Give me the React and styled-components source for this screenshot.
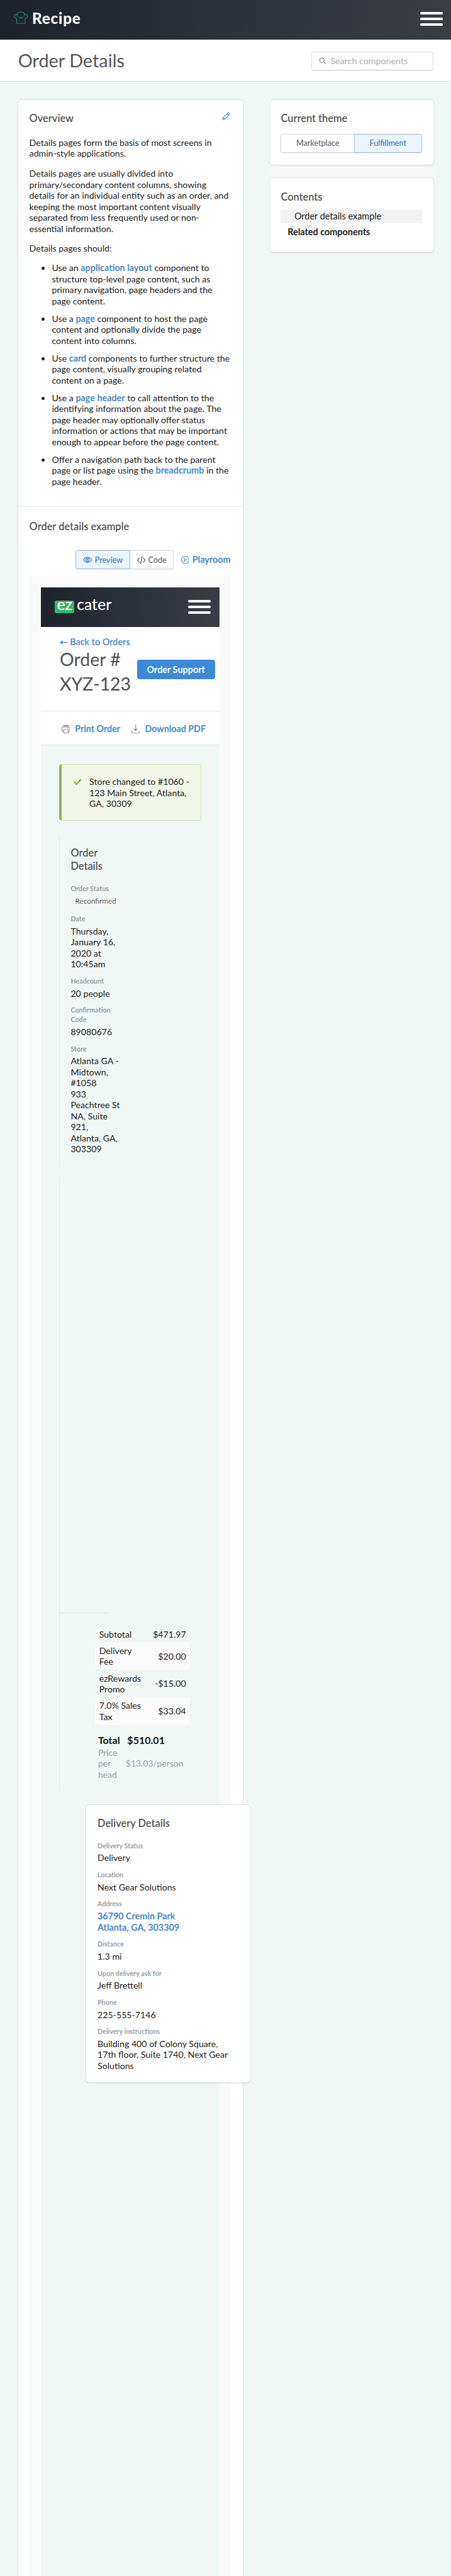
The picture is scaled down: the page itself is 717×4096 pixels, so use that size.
import React from "react";
import styled, { createGlobalStyle, css } from "styled-components";

const link = "#4689c8";
const mint = "#f1f7f5";

const GlobalStyle = createGlobalStyle`
  * { box-sizing: border-box; }
  html, body { margin: 0; padding: 0; background: ${mint}; overflow: hidden; }
  body { font-family: Lato, "Liberation Sans", sans-serif; }
  h1, h2, p, ul, dl, dd { margin: 0; padding: 0; font-weight: 400; }
`;

const Page = styled.div`
  zoom: 0.8965;
  width: 800px;
  height: 4570px;
  display: flex;
  flex-direction: column;
  overflow: hidden;
  background: ${mint};
  color: #1c1c1c;
  font-size: 15.8px;
  line-height: 19.5px;
`;

const darkBar = css`
  display: flex;
  justify-content: space-between;
  height: 70px;
  flex: none;
  background: linear-gradient(100deg, #1d222a 0%, #2d3139 50%, #3b3d45 100%);
`;

const TopBar = styled.header`
  ${darkBar}
  padding: 21.5px 15px 0 24px;
`;

const Brand = styled.div`
  display: flex;
  gap: 8px;
  margin-top: -3px;
  color: #fff;
  font-size: 27px;
  font-weight: 900;
  letter-spacing: 0.9px;
  line-height: 26px;
  svg { margin-top: 1.5px; }
`;

const Burger = styled.button`
  display: flex;
  flex-direction: column;
  gap: 6px;
  width: 40px;
  padding: 0;
  border: 0;
  background: none;
  span { height: 4px; border-radius: 2px; background: #fff; }
`;

const TitleBar = styled.div`
  display: flex;
  justify-content: space-between;
  flex: none;
  height: 75px;
  padding: 21px 32px 0;
  background: #fff;
  border-bottom: 1px solid #d3dada;
  box-shadow: 0 1px 4px rgba(0, 0, 0, 0.04);
`;

const PageTitle = styled.h1`
  margin-top: -1.5px;
  color: #565656;
  font-size: 32.2px;
  line-height: 36px;
`;

const SearchBox = styled.label`
  display: flex;
  align-items: center;
  gap: 8px;
  width: 216px;
  height: 34px;
  padding: 0 12px;
  border: 1px solid #dcdcdc;
  border-bottom-color: #cfcfcf;
  border-radius: 4px;
  box-shadow: 0 1px 1px rgba(0, 0, 0, 0.06);
  color: #adadad;
  font-size: 15.9px;
  svg { color: #8a8a8a; }
`;

const Columns = styled.main`
  display: flex;
  align-items: flex-start;
  justify-content: space-between;
  flex: 1;
  padding: 32px 32px 0;
`;

const cardFrame = css`
  background: #fff;
  border-radius: 6px;
  box-shadow: 0 0 0 1px rgba(0, 0, 0, 0.04), 0 1px 3px rgba(0, 0, 0, 0.12);
`;

const MainCard = styled.section`
  ${cardFrame}
  width: 399px;
  height: 4500px;
`;

const Section = styled.div`
  padding: ${(p) => p.$top}px 20px ${(p) => p.$bottom || 0}px;
  border-bottom: ${(p) => (p.$divided ? "1px solid #e4e6e6" : "0")};
`;

const Heading = styled.h2`
  margin-bottom: ${(p) => p.$gap || 0}px;
  color: #545454;
  font-size: 18.3px;
  font-weight: 600;
  line-height: 24.4px;
`;

const HeadingRow = styled.div`
  display: flex;
  justify-content: space-between;
  margin-bottom: 21.1px;
  padding-right: 2px;
`;

const Copy = styled.p`
  max-width: 356px;
  margin-bottom: ${(p) => p.$gap || 16}px;
`;

const Bullets = styled.ul`
  padding-left: 40px;
  li { margin-bottom: 11.8px; }
`;

const Link = styled.a`
  color: ${link};
  font-size: 16px;
  font-weight: 700;
`;

const ToolRow = styled.div`
  display: flex;
  justify-content: flex-end;
  align-items: center;
  gap: 13px;
  margin: 30.5px 2px 11.3px 0;
`;

const Segments = styled.div`
  display: flex;
  width: ${(p) => p.$width}px;
  height: 34px;
`;

const Segment = styled.button`
  display: flex;
  align-items: center;
  justify-content: center;
  gap: 5px;
  width: ${(p) => p.$width}px;
  padding: 0;
  border: 1px solid ${(p) => (p.$active ? "#8fb8de" : "#d6d6d6")};
  border-left-width: ${(p) => (p.$side === "right" && !p.$active ? 0 : 1)}px;
  border-right-width: ${(p) => (p.$side === "left" && !p.$active ? 0 : 1)}px;
  border-radius: ${(p) => (p.$side === "left" ? "4px 0 0 4px" : "0 4px 4px 0")};
  box-shadow: 0 1px 1px rgba(0, 0, 0, 0.07);
  background: ${(p) => (p.$active ? "#eaf5fe" : "#fff")};
  color: ${(p) => (p.$active ? "#2f6fb5" : "#565656")};
  font: 400 14.1px Lato, sans-serif;
`;

const Playroom = styled.a`
  display: flex;
  align-items: center;
  gap: 6px;
  color: ${link};
  font-size: 16.1px;
  font-weight: 700;
`;

const Stage = styled.div`
  width: 357px;
  height: 3560px;
  padding: 21px 20px 0 21px;
  background: #fafafa;
`;

const Preview = styled.div`
  width: 316px;
  height: 3540px;
  background: ${mint};
`;

const AppBar = styled.div`
  ${darkBar}
  padding: 22px 15px 0 24px;
`;

const EzLogo = styled.div`
  display: flex;
  align-items: center;
  gap: 4px;
  height: 24px;
  color: #fff;
  font-size: 27.8px;
  font-weight: 500;
  line-height: 22px;
`;

const EzTile = styled.span`
  width: 35px;
  height: 22px;
  border-radius: 3px;
  background: #35b56b;
  line-height: 13px;
  text-align: center;
`;

const EzWord = styled.span`
  margin-top: -8px;
`;

const OrderHeader = styled.div`
  height: 149px;
  padding: 17px 8px 0 33px;
  border-bottom: 1px solid #dfe3e3;
  background: #fff;
`;

const BackLink = styled.a`
  display: flex;
  align-items: center;
  gap: 4px;
  margin-bottom: -1px;
  color: ${link};
  font-size: 16.1px;
  font-weight: 600;
  line-height: 20px;
`;

const OrderTitleRow = styled.div`
  display: flex;
  justify-content: space-between;
  align-items: center;
`;

const OrderTitle = styled.h1`
  width: 130px;
  color: #4f4f4f;
  font-size: 31.7px;
  line-height: 43px;
`;

const SupportButton = styled.button`
  width: 138px;
  height: 34px;
  margin-bottom: 8px;
  padding: 0;
  border: 0;
  border-radius: 4px;
  background: #3b8bd8;
  color: #fff;
  font: 700 16.1px Lato, sans-serif;
`;

const ActionBar = styled.div`
  display: flex;
  align-items: center;
  gap: 20px;
  height: 61px;
  padding: 3px 0 0 36px;
  border-bottom: 1px solid #dfe3e3;
  background: #fff;
`;

const Action = styled.a`
  display: flex;
  align-items: center;
  gap: 9px;
  color: ${link};
  font-size: 15.9px;
  font-weight: 700;
  white-space: nowrap;
`;

const Alert = styled.div`
  display: flex;
  align-items: flex-start;
  gap: 14px;
  width: 252px;
  height: 100px;
  margin: 33px 0 0 32px;
  padding: 20.5px 12px 0 21px;
  border: 1px solid #d3e0b8;
  border-left: 5px solid #8ab556;
  border-radius: 5px;
  background: #f3f7e7;
  svg { flex: none; margin-top: 4px; }
`;

const Rail = styled.div`
  width: ${(p) => p.$width || 110}px;
  height: ${(p) => p.$height}px;
  margin: ${(p) => p.$top}px 0 0 32px;
  padding: ${(p) => p.$pad || 0}px 0 0 19.3px;
  border-left: 1px solid #e4ebe9;
`;

const RailRule = styled.div`
  width: 88px;
  height: 773px;
  margin-left: -20px;
  border-bottom: 1px solid #dde3e1;
`;

const Details = styled.dl`
  width: ${(p) => p.$width || 93}px;
  dt {
    margin-bottom: 3.8px;
    color: #9a9fa6;
    font-size: 12px;
    font-weight: 700;
    line-height: 17px;
  }
  dd { margin-bottom: 11.4px; }
`;

const Badge = styled.span`
  display: inline-block;
  padding: 1.1px 8px;
  border-radius: 3px;
  background: #f4f6f6;
  color: #666;
  font-size: 13.1px;
`;

const Charges = styled.div`
  width: 168px;
  margin: 22.5px 0 0 43.5px;
`;

const Charge = styled.div`
  display: flex;
  justify-content: space-between;
  align-items: center;
  padding: 4.9px 7px;
  background: ${(p) => (p.$striped ? "#fafafa" : "transparent")};
  span:first-child { width: 80px; }
`;

const Total = styled.div`
  display: flex;
  gap: 13px;
  margin: 15.5px 0 0 48.5px;
  color: #111;
  font-size: 17.9px;
  font-weight: 700;
  line-height: 23.4px;
`;

const PerHead = styled.div`
  display: flex;
  align-items: center;
  margin-left: 48.5px;
  color: #9aa1ac;
  font-size: 15.6px;
  span:first-child { width: 49px; padding-right: 10px; }
`;

const DeliveryCard = styled.section`
  ${cardFrame}
  width: 291px;
  height: 492px;
  margin: 25px 0 0 80px;
  padding: 20.5px 20px 0;
`;

const Side = styled.aside`
  display: flex;
  flex-direction: column;
  gap: 24px;
  width: 290px;
  border-radius: 6px;
  background: #f5f6f6;
`;

const SideCard = styled.section`
  ${cardFrame}
  height: ${(p) => p.$height}px;
  padding: 20.5px 20px 0;
`;

const TocItem = styled.a`
  display: block;
  height: 24px;
  margin-bottom: 4px;
  padding-left: ${(p) => (p.$active ? 24 : 12)}px;
  background: ${(p) => (p.$active ? "#f3f3f3" : "transparent")};
  font-size: 16.1px;
  font-weight: ${(p) => (p.$active ? 400 : 700)};
  line-height: 24px;
`;

const Icon = ({ w, stroke = 2, children }) => (
  <svg width={w} height={w} viewBox="0 0 24 24" fill="none" stroke="currentColor" strokeWidth={stroke} strokeLinecap="round" strokeLinejoin="round">
    {children}
  </svg>
);

const Menu = () => (
  <Burger aria-label="Menu">
    <span />
    <span />
    <span />
  </Burger>
);

const Field = ({ label, children }) => (
  <>
    <dt>{label}</dt>
    <dd>{children}</dd>
  </>
);

export default function App() {
  return (
    <Page>
      <GlobalStyle />
      <TopBar>
        <Brand>
          <svg width="25" height="23" viewBox="0 0 25 23" fill="none" stroke="#16895d" strokeWidth="1.3" strokeLinejoin="round">
            <path d="M5 12.500C-1 12-.2 4.500 6 5.200 7.500-.2 17.500-.2 19 5.200c6.200-.7 7 6.800 1 7.300v9H5z" />
            <path d="M6 5.200c-.5 1.500-.2 2.800.5 3.800M19 5.200c.5 1.500.2 2.800-.5 3.800M8.500 9.500c.5 3 4 3 4 .5 0 2.500 3.500 2.500 4-.5" />
          </svg>
          <span>Recipe</span>
        </Brand>
        <Menu />
      </TopBar>
      <TitleBar>
        <PageTitle>Order Details</PageTitle>
        <SearchBox>
          <Icon w={13} stroke={2.6}>
            <circle cx="10" cy="10" r="7.500" />
            <path d="M15.500 15.500 22 22" />
          </Icon>
          Search components
        </SearchBox>
      </TitleBar>
      <Columns>
        <MainCard>
          <Section $divided $top={20.5} $bottom={22.5}>
            <HeadingRow>
              <Heading>Overview</Heading>
              <Link aria-label="Edit">
                <Icon w={15}>
                  <path d="M2 22l1.500-6L17 2.500c1.500-1.500 6 3 4.500 4.500L8 20.500zM14.500 5l4.500 4.500M3.500 16 8 20.500" />
                </Icon>
              </Link>
            </HeadingRow>
            <Copy>Details pages form the basis of most screens in admin-style applications.</Copy>
            <Copy>
              Details pages are usually divided into primary/secondary content columns, showing details for an
              individual entity such as an order, and keeping the most important content visually separated from less
              frequently used or non-essential information.
            </Copy>
            <Copy $gap={15}>Details pages should:</Copy>
            <Bullets>
              <li>
                Use an <Link>application layout</Link> component to structure top-level page content, such as primary
                navigation, page headers and the page content.
              </li>
              <li>
                Use a <Link>page</Link> component to host the page content and optionally divide the page content into
                columns.
              </li>
              <li>
                Use <Link>card</Link> components to further structure the page content, visually grouping related
                content on a page.
              </li>
              <li>
                Use a <Link>page header</Link> to call attention to the identifying information about the page. The
                page header may optionally offer status information or actions that may be important enough to appear
                before the page content.
              </li>
              <li>
                Offer a navigation path back to the parent page or list page using the <Link>breadcrumb</Link> in the
                page header.
              </li>
            </Bullets>
          </Section>
          <Section $top={22}>
            <Heading>Order details example</Heading>
            <ToolRow>
              <Segments $width={174}>
                <Segment $active $side="left" $width={97}>
                  <Icon w={16} stroke={1.8}>
                    <path d="M1.500 12C5 2.500 19 2.500 22.500 12 19 21.500 5 21.500 1.500 12z" />
                    <circle cx="12" cy="12" r="4.500" />
                    <circle cx="12" cy="12" r="1" />
                  </Icon>
                  Preview
                </Segment>
                <Segment $side="right" $width={77}>
                  <Icon w={15} stroke={2.2}>
                    <path d="M6 6 1 12l5 6M18 6l5 6-5 6M14 2l-4 20" />
                  </Icon>
                  Code
                </Segment>
              </Segments>
              <Playroom>
                <Icon w={14}>
                  <circle cx="12" cy="12" r="11" />
                  <path d="M9 7.500 16.500 12 9 16.500z" />
                </Icon>
                Playroom
              </Playroom>
            </ToolRow>
            <Stage>
              <Preview>
                <AppBar>
                  <EzLogo>
                    <EzTile>ez</EzTile>
                    <EzWord>cater</EzWord>
                  </EzLogo>
                  <Menu />
                </AppBar>
                <OrderHeader>
                  <BackLink>
                    <svg width="14" height="8" viewBox="0 0 14 8" fill="currentColor">
                      <path d="M0 4 5 0v3.200h9v1.600H5V8z" />
                    </svg>
                    Back to Orders
                  </BackLink>
                  <OrderTitleRow>
                    <OrderTitle>Order # XYZ-123</OrderTitle>
                    <SupportButton>Order Support</SupportButton>
                  </OrderTitleRow>
                </OrderHeader>
                <ActionBar>
                  <Action>
                    <svg width="15" height="16" viewBox="0 0 15 16" fill="none" stroke="#8b8b8b" strokeWidth="1.200" strokeLinejoin="round">
                      <path d="M3.500 12H.7V4.500h13.600V12h-2.800M3.500 4.500v-3h8v3M3.500 9h8v6h-8zM5 2.800h5M10.500 6.800h1.500" />
                    </svg>
                    Print Order
                  </Action>
                  <Action>
                    <svg width="15" height="16" viewBox="0 0 15 16" fill="none" stroke="#8b8b8b" strokeWidth="1.300">
                      <path d="M7.500 0v10.500M4 7.200l3.500 3.500L11 7.200M.7 10.500v4.800h13.600v-4.800" />
                    </svg>
                    Download PDF
                  </Action>
                </ActionBar>
                <Alert>
                  <svg width="14" height="12" viewBox="0 0 14 12" fill="none" stroke="#86b04e" strokeWidth="2.800">
                    <path d="M1 5.800 5 9.800 13 1.500" />
                  </svg>
                  <div>Store changed to #1060 - 123 Main Street, Atlanta, GA, 30309</div>
                </Alert>
                <Rail $top={25} $height={590} $pad={19.5}>
                  <Heading $gap={18.4}>
                    Order
                    <br />
                    Details
                  </Heading>
                  <Details>
                    <Field label="Order Status">
                      <Badge>Reconfirmed</Badge>
                    </Field>
                    <Field label="Date">Thursday, January 16, 2020 at 10:45am</Field>
                    <Field label="Headcount">20 people</Field>
                    <Field label="Confirmation Code">89080676</Field>
                    <Field label="Store">
                      Atlanta GA - Midtown, #1058
                      <br />
                      933 Peachtree St NA, Suite 921,
                      <br />
                      Atlanta, GA, 303309
                    </Field>
                  </Details>
                </Rail>
                <Rail $top={18} $height={1088} $width={250}>
                  <RailRule />
                  <Charges>
                    <Charge>
                      <span>Subtotal</span>
                      <span>$471.97</span>
                    </Charge>
                    <Charge $striped>
                      <span>Delivery Fee</span>
                      <span>$20.00</span>
                    </Charge>
                    <Charge>
                      <span>ezRewards Promo</span>
                      <span>-$15.00</span>
                    </Charge>
                    <Charge $striped>
                      <span>7.0% Sales Tax</span>
                      <span>$33.04</span>
                    </Charge>
                  </Charges>
                  <Total>
                    <span>Total</span>
                    <span>$510.01</span>
                  </Total>
                  <PerHead>
                    <span>Price per head</span>
                    <span>$13.03/person</span>
                  </PerHead>
                </Rail>
                <DeliveryCard>
                  <Heading $gap={18.5}>Delivery Details</Heading>
                  <Details $width={240}>
                    <Field label="Delivery Status">Delivery</Field>
                    <Field label="Location">Next Gear Solutions</Field>
                    <Field label="Address">
                      <Link>
                        36790 Cremin Park
                        <br />
                        Atlanta, GA, 303309
                      </Link>
                    </Field>
                    <Field label="Distance">1.3 mi</Field>
                    <Field label="Upon delivery ask for">Jeff Brettell</Field>
                    <Field label="Phone">225-555-7146</Field>
                    <Field label="Delivery instructions">
                      Building 400 of Colony Square, 17th floor, Suite 1740, Next Gear Solutions
                    </Field>
                  </Details>
                </DeliveryCard>
              </Preview>
            </Stage>
          </Section>
        </MainCard>
        <Side>
          <SideCard $height={115}>
            <Heading $gap={15.3}>Current theme</Heading>
            <Segments $width={250}>
              <Segment $side="left" $width={130}>Marketplace</Segment>
              <Segment $active $side="right" $width={120}>Fulfillment</Segment>
            </Segments>
          </SideCard>
          <SideCard $height={131}>
            <Heading $gap={11}>Contents</Heading>
            <TocItem $active>Order details example</TocItem>
            <TocItem>Related components</TocItem>
          </SideCard>
        </Side>
      </Columns>
    </Page>
  );
}
